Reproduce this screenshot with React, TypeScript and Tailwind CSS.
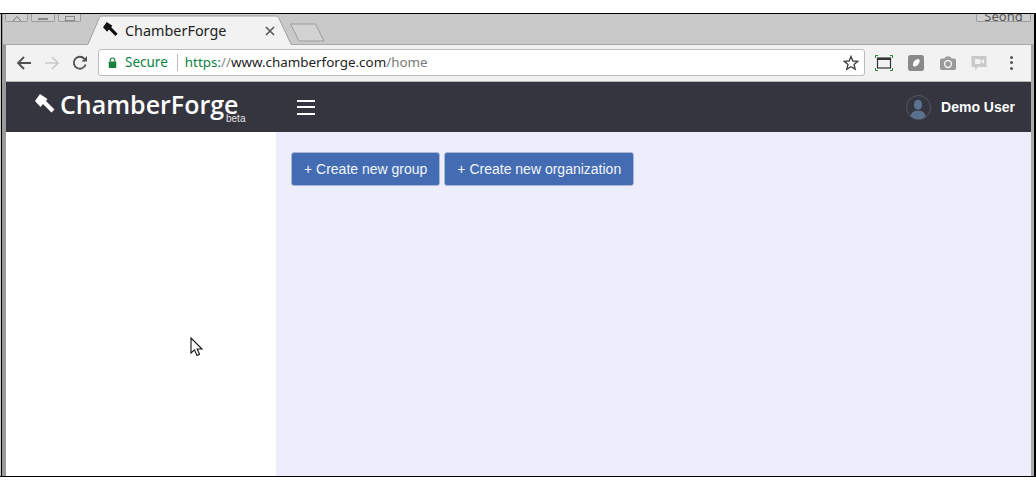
import React from "react";

const sans = "font-['Liberation_Sans',Arial,sans-serif]";
const ui = "font-['Noto_Sans',sans-serif]";

function Hammer({ className, fill }: { className: string; fill: string }) {
  return (
    <svg viewBox="0 0 20 20" className={className}>
      <path d="M5 0 L0 7 L5.5 13 L8 10 L16.5 18.5 L19.5 15.5 L11 7 L12.5 5 Z" fill={fill} />
    </svg>
  );
}

function WinBtn({ w, children }: { w: string; children?: React.ReactNode }) {
  return (
    <div className={`${w} h-[8px] border border-t-0 border-[#9c9c9c] rounded-b-[2px] flex items-end justify-center overflow-hidden bg-[#cfcfcf]`}>
      {children}
    </div>
  );
}

export default function App() {
  return (
    <div className={`w-[1036px] h-[490px] bg-white pt-[13px] overflow-hidden ${sans}`}>
      <div className="relative w-[1036px] h-[464px] border-t-[1.5px] border-b-[1.5px] border-black flex bg-[#c9c9c9]">
        <div className="w-[1px] bg-black ml-[1px]" />
        <div className="w-[4px] bg-[#9a9a9a]" />
        <div className="flex-1 flex flex-col min-w-0">
          {/* Tab strip */}
          <div className="relative h-[31px] -ml-[3px] w-[1031px] flex bg-[#c9c9c9] border-b border-[#a8a8a8]">
            <div className="flex h-[8px] ml-[2px]">
              <WinBtn w="w-[23px]">
                <svg viewBox="0 0 12 6" className="w-[12px] h-[6px]"><path d="M2 6 L6 1.5 L10 6" stroke="#777" fill="none" strokeWidth="1" /></svg>
              </WinBtn>
              <div className="w-[3px]" />
              <WinBtn w="w-[24px]"><div className="w-[10px] h-[2px] bg-[#888] mb-[1px]" /></WinBtn>
              <div className="w-[3px]" />
              <WinBtn w="w-[23px]"><div className="w-[10px] h-[5px] border border-[#888]" /></WinBtn>
            </div>
            <div className="relative ml-[7px] w-[204px] h-[31px] flex items-center pl-[15px] text-[15px]">
              <svg viewBox="0 0 204 31" className="absolute inset-0 w-[204px] h-[31px]">
                <path d="M0 31 L11.5 3.5 Q12.5 2 14 2 L188 2 Q190 2 190.5 3.5 L203 31 Z" fill="#f2f2f2" />
                <path d="M0 30 L11.5 3.5 Q12.5 2 14 2 L188 2 Q190 2 190.5 3.5 L203 30" fill="none" stroke="#a3a3a3" />
              </svg>
              <Hammer className="relative w-[15px] h-[15px]" fill="#111" />
              <span className={`relative ml-[7px] mt-[2px] text-[#222] ${ui} text-[14.4px]`}>ChamberForge</span>
              <svg viewBox="0 0 10 10" className="absolute left-[177px] top-[12px] w-[10px] h-[10px]">
                <path d="M1 1 L9 9 M9 1 L1 9" stroke="#555" strokeWidth="1.6" />
              </svg>
            </div>
            <svg viewBox="0 0 38 20" className="w-[38px] h-[20px] -ml-[3px] mt-[9px]">
              <path d="M1.5 1 L25 1 Q26.5 1 27 2 L35 18 L11 18 Q10 18 9.5 17 Z" fill="#d2d2d2" stroke="#9c9c9c" />
            </svg>
            <div className="ml-auto mr-[3px] w-[55px] h-[8px] border border-t-0 border-[#9c9c9c] rounded-b-[2px] overflow-hidden flex justify-center items-end bg-[#cfcfcf]">
              <span className={`text-[13px] leading-[10px] text-[#555] ${ui}`}>Seong</span>
            </div>
          </div>

          {/* Toolbar */}
          <div className="h-[37px] w-[1025px] bg-[#f2f2f2] border-b border-[#b5b5b5] flex items-center shrink-0">
            <svg viewBox="0 0 16 16" className="w-[16px] h-[16px] ml-[10px] -mt-[1px]">
              <path d="M15 8 H2 M8 2 L2 8 L8 14" fill="none" stroke="#505050" strokeWidth="1.8" />
            </svg>
            <svg viewBox="0 0 16 16" className="w-[16px] h-[16px] ml-[12px] -mt-[1px]">
              <path d="M1 8 H14 M8 2 L14 8 L8 14" fill="none" stroke="#c9c9c9" strokeWidth="1.7" />
            </svg>
            <svg viewBox="0 0 16 16" className="w-[16px] h-[16px] ml-[12px] -mt-[1px]">
              <path d="M13.6 9.5 A6 6 0 1 1 12.4 3.8" fill="none" stroke="#505050" strokeWidth="1.8" />
              <path d="M9.5 6.5 H15 V1 Z" fill="#505050" />
            </svg>
            <div className={`ml-[10px] w-[767px] h-[27px] -mt-[1px] bg-white border border-[#bcbcbc] rounded-[3px] flex items-center ${ui}`}>
              <svg viewBox="0 0 10 12" className="w-[9px] h-[11px] ml-[9px] -mt-[1px]">
                <path d="M2.5 5 V3.5 A2.5 2.5 0 0 1 7.5 3.5 V5" fill="none" stroke="#188038" strokeWidth="1.3" />
                <rect x="0.8" y="5" width="8.4" height="7" rx="0.8" fill="#188038" />
              </svg>
              <span className="ml-[8px] text-[13.5px] text-[#0b8043]">Secure</span>
              <div className="ml-[9px] w-px h-[17px] bg-[#bbb]" />
              <span className="ml-[7px] text-[13.4px] whitespace-nowrap">
                <span className="text-[#0b8043]">https:</span>
                <span className="text-[#888]">//</span>
                <span className="text-[#222]">www.chamberforge.com</span>
                <span className="text-[#777]">/home</span>
              </span>
              <svg viewBox="0 0 16 16" className="ml-auto mr-[5px] w-[16px] h-[16px]">
                <path d="M8 1.5 L9.9 6 L14.7 6.4 L11 9.5 L12.2 14.2 L8 11.7 L3.8 14.2 L5 9.5 L1.3 6.4 L6.1 6 Z" fill="none" stroke="#444" strokeWidth="1.4" />
              </svg>
            </div>
            {/* extension icons */}
            <svg viewBox="0 0 18 16" className="ml-[10px] w-[18px] h-[16px] -mt-[1px]">
              <path d="M0.5 3 V0.5 H3 M15 0.5 H17.5 V3 M0.5 13 V15.5 H3 M15 15.5 H17.5 V13" fill="none" stroke="#1f8a3b" strokeWidth="1" />
              <rect x="2.5" y="3" width="13" height="10" fill="none" stroke="#333" strokeWidth="1.2" />
              <rect x="2.5" y="3" width="13" height="2" fill="#333" />
            </svg>
            <svg viewBox="0 0 16 16" className="ml-[15px] w-[16px] h-[16px] -mt-[1px]">
              <rect width="16" height="16" rx="2.5" fill="#8a8a8a" />
              <path d="M5 10 Q5 5 10 4 Q12 4 11.5 7 Q10 11 7 11.5 Q5 12 5 10 Z" fill="#fff" />
            </svg>
            <svg viewBox="0 0 16 14" className="ml-[16px] w-[16px] h-[14px] -mt-[1px]">
              <path d="M1.5 2.5 H4.5 L6 0.5 H10 L11.5 2.5 H14.5 Q16 2.5 16 4 V12.5 Q16 14 14.5 14 H1.5 Q0 14 0 12.5 V4 Q0 2.5 1.5 2.5 Z" fill="#9a9a9a" />
              <circle cx="8" cy="8" r="3.4" fill="none" stroke="#f2f2f2" strokeWidth="1.5" />
            </svg>
            <svg viewBox="0 0 16 16" className="ml-[15px] w-[16px] h-[16px] -mt-[1px]">
              <path d="M0.5 1 H15.5 V12 H7 L4 15 V12 H0.5 Z" fill="#c9c9c9" />
              <rect x="4" y="4" width="5.5" height="5" fill="#f2f2f2" />
              <path d="M9.5 6.5 L13 4 V9 Z" fill="#f2f2f2" />
            </svg>
            <div className="ml-[23px] flex flex-col gap-[2.5px] -mt-[1px]">
              <div className="w-[3px] h-[3px] rounded-full bg-[#555]" />
              <div className="w-[3px] h-[3px] rounded-full bg-[#555]" />
              <div className="w-[3px] h-[3px] rounded-full bg-[#555]" />
            </div>
          </div>

          {/* Navbar */}
          <div className="h-[50px] w-[1025px] bg-[#353540] flex items-center shrink-0">
            <div className="w-[291px] relative flex items-center h-full pl-[29px]">
              <Hammer className="w-[20px] h-[20px] -mt-[6px]" fill="#fff" />
              <span className="ml-[5px] -mt-[5px] text-[25px] leading-none text-white font-semibold font-['Open_Sans',sans-serif]">ChamberForge</span>
              <span className={`absolute left-[220px] top-[32px] text-[10px] leading-none text-[#e4e4e4] ${sans}`}>beta</span>
            </div>
            <div className="flex flex-col gap-[4.5px]">
              <div className="w-[18px] h-[2px] bg-white" />
              <div className="w-[18px] h-[2px] bg-white" />
              <div className="w-[18px] h-[2px] bg-white" />
            </div>
            <div className="ml-auto flex items-center mr-[16px]">
              <div className="w-[25px] h-[25px] rounded-full border border-[#54586a] bg-[#353540] overflow-hidden">
                <svg viewBox="0 0 25 25" className="w-full h-full">
                  <ellipse cx="12" cy="9.5" rx="4.5" ry="5.5" fill="#5a7190" />
                  <path d="M3 25 Q3.5 17.5 9.5 16 H14.5 Q20.5 17.5 21 25 Z" fill="#5a7190" />
                </svg>
              </div>
              <span className="ml-[10px] text-[14px] font-bold text-white">Demo User</span>
            </div>
          </div>

          {/* Body */}
          <div className="flex-1 w-[1025px] flex min-h-0">
            <div className="relative w-[270px] bg-white">
              <svg viewBox="0 0 14 21" className="absolute left-[184px] top-[205px] w-[14px] h-[21px]">
                <path d="M1 1 V16 L4.5 12.8 L7 18.5 L9.5 17.3 L7.2 12 L12 12 Z" fill="#fff" stroke="#111" strokeWidth="1.1" />
              </svg>
            </div>
            <div className="flex-1 bg-[#ededfb] pl-[15px] pt-[20px] flex items-start gap-[4px]">
              <button className="h-[34px] px-[12px] bg-[#446cb3] border border-[#a9b8d6] rounded-[3px] text-[14px] text-[#f2f5fa]">+ Create new group</button>
              <button className="h-[34px] px-[12px] bg-[#446cb3] border border-[#a9b8d6] rounded-[3px] text-[14px] text-[#f2f5fa]">+ Create new organization</button>
            </div>
          </div>
        </div>
        <div className="w-[3px] bg-[#a9a9a9]" />
        <div className="w-[2px] bg-black" />
      </div>
    </div>
  );
}
